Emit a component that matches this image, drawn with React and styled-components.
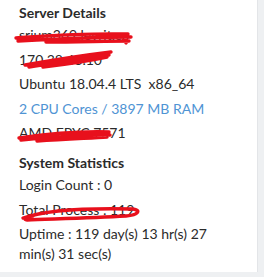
import React from "react";
import styled, { createGlobalStyle } from "styled-components";

const Global = createGlobalStyle`
  html, body { margin: 0; padding: 0; background: #eef0f2; }
  body { font-family: Lato, "Open Sans", sans-serif; }
`;

const Card = styled.div`
  width: 258px;
  height: 272px;
  box-sizing: border-box;
  background: #fff;
  border-right: 1px solid #e3e5e8;
  padding: 3px 0 0 19px;
  color: #2b2b2b;
  font-size: 14px;
  line-height: 20px;
  display: flex;
  flex-direction: column;
  gap: 10px;
`;

const Section = styled.section`
  display: flex;
  flex-direction: column;
  gap: 4.5px;
`;

const Heading = styled.h4`
  margin: 0 0 -2.5px;
  font-size: 14px;
  font-weight: 700;
  line-height: 20px;
`;

const Line = styled.p`
  position: relative;
  margin: 0;
  color: ${(p) => (p.$blue ? "#4f94d4" : "#2b2b2b")};
  white-space: ${(p) => (p.$wrap ? "normal" : "pre")};
  width: 225px;
`;

const Scribble = styled.svg`
  position: absolute;
  left: ${(p) => p.$x}px;
  top: ${(p) => p.$y}px;
  overflow: visible;
  pointer-events: none;
`;

function Red({ x, y, w, h, d }) {
  return (
    <Scribble $x={x} $y={y} width={w} height={h} viewBox={`0 0 ${w} ${h}`}>
      <path d={d} fill="none" stroke="#e8101c" strokeWidth="3.4" strokeLinecap="round" strokeLinejoin="round" />
    </Scribble>
  );
}

export default function App() {
  return (
    <>
      <Global />
      <Card>
        <Section>
          <Heading>Server Details</Heading>
          <Line>
            srium369.levrit.co
            <Red x={-3} y={5} w={120} h={14}
              d="M0 8 C30 6 60 3 112 4 M2 11 C40 9 80 7 115 7 M30 12 C60 12 90 11 113 11 M95 5 C105 6 113 9 110 13" />
          </Line>
          <Line>
            170.38.48.10
            <Red x={4} y={0} w={90} h={20}
              d="M2 15 C25 11 55 6 88 2 M6 17 C35 13 60 9 86 5 M20 17 C45 14 70 10 84 7" />
          </Line>
          <Line>Ubuntu 18.04.4 LTS  x86_64</Line>
          <Line $blue>2 CPU Cores / 3897 MB RAM</Line>
          <Line>
            AMD EPYC 7571
            <Red x={-2} y={5} w={96} h={14}
              d="M2 10 C30 6 60 3 92 4 M4 12 C35 9 65 7 93 7 M20 13 C50 11 75 10 90 9" />
          </Line>
        </Section>
        <Section>
          <Heading>System Statistics</Heading>
          <Line>Login Count : 0</Line>
          <Line>
            Total Process : 119
            <Red x={2} y={6} w={118} h={16}
              d="M2 12 C25 4 70 2 112 3 C120 4 118 9 105 10 C70 12 30 13 6 14 C2 14 4 11 12 10" />
          </Line>
          <Line $wrap>Uptime : 119 day(s) 13 hr(s) 27 min(s) 31 sec(s)</Line>
        </Section>
      </Card>
    </>
  );
}
